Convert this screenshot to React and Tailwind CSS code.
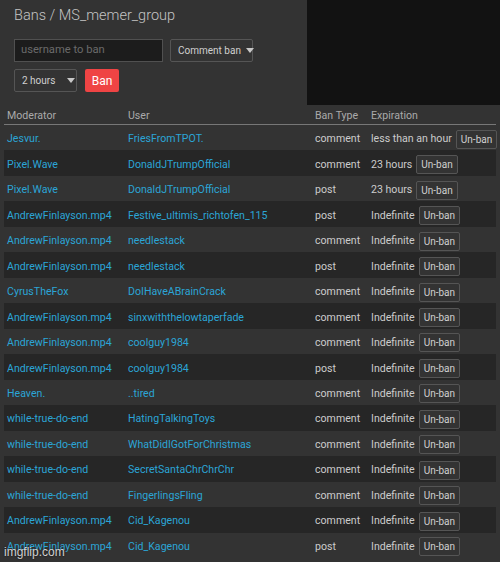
import React from "react";

const rows = [
  ["Jesvur.", "FriesFromTPOT.", "comment", "less than an hour"],
  ["Pixel.Wave", "DonaldJTrumpOfficial", "comment", "23 hours"],
  ["Pixel.Wave", "DonaldJTrumpOfficial", "post", "23 hours"],
  ["AndrewFinlayson.mp4", "Festive_ultimis_richtofen_115", "post", "Indefinite"],
  ["AndrewFinlayson.mp4", "needlestack", "comment", "Indefinite"],
  ["AndrewFinlayson.mp4", "needlestack", "post", "Indefinite"],
  ["CyrusTheFox", "DoIHaveABrainCrack", "comment", "Indefinite"],
  ["AndrewFinlayson.mp4", "sinxwiththelowtaperfade", "comment", "Indefinite"],
  ["AndrewFinlayson.mp4", "coolguy1984", "comment", "Indefinite"],
  ["AndrewFinlayson.mp4", "coolguy1984", "post", "Indefinite"],
  ["Heaven.", "..tired", "comment", "Indefinite"],
  ["while-true-do-end", "HatingTalkingToys", "comment", "Indefinite"],
  ["while-true-do-end", "WhatDidIGotForChristmas", "comment", "Indefinite"],
  ["while-true-do-end", "SecretSantaChrChrChr", "comment", "Indefinite"],
  ["while-true-do-end", "FingerlingsFling", "comment", "Indefinite"],
  ["AndrewFinlayson.mp4", "Cid_Kagenou", "comment", "Indefinite"],
  ["AndrewFinlayson.mp4", "Cid_Kagenou", "post", "Indefinite"],
];

const Caret = () => (
  <svg width="8" height="5" viewBox="0 0 8 5" className="shrink-0">
    <path d="M0 0 L8 0 L4 5 Z" fill="#c8c8c8" />
  </svg>
);

export default function App() {
  return (
    <div
      className="relative w-[500px] h-[562px] overflow-hidden bg-[#333333] text-[#cccccc]"
      style={{ fontFamily: "Roboto, 'Noto Sans', sans-serif" }}
    >
      <div className="flex h-[105px]">
        <div className="w-[307px] pl-[14px]">
          <div className="pt-[6px] text-[14.5px] leading-[20px] text-[#c4c4c4] font-light">
            Bans / MS_memer_group
          </div>
          <div className="mt-[13px] flex gap-[7px]">
            <div className="w-[149px] shrink-0 h-[23px] bg-[#1c1c1c] border border-[#505050] flex items-center pl-[6px] text-[11.2px] text-[#6a6a6a] whitespace-nowrap">
              username to ban
            </div>
            <div className="w-[83px] shrink-0 h-[23px] border border-[#555555] rounded-[2px] flex items-center gap-[5px] pl-[7px] text-[10px] text-[#d0d0d0] whitespace-nowrap">
              <span>Comment ban</span>
              <Caret />
            </div>
          </div>
          <div className="mt-[7px] flex gap-[8px]">
            <div className="w-[63px] shrink-0 h-[23px] border border-[#555555] rounded-[2px] flex items-center gap-[12px] pl-[7px] text-[10px] text-[#d0d0d0] whitespace-nowrap">
              <span>2 hours</span>
              <Caret />
            </div>
            <div className="w-[34px] shrink-0 h-[23px] bg-[#ef4444] rounded-[2px] flex items-center justify-center text-[12px] text-white">
              Ban
            </div>
          </div>
        </div>
        <div className="flex-1 bg-[#121212]" />
      </div>

      <div className="mx-[4px] text-[10.6px]">
        <div className="grid grid-cols-[121px_187px_56px_1fr] h-[20px] pt-[2px] items-center border-b border-[#777777] text-[#aaaaaa]">
          <div className="pl-[3px]">Moderator</div>
          <div className="pl-[3px]">User</div>
          <div className="pl-[3px]">Ban Type</div>
          <div className="pl-[3px]">Expiration</div>
        </div>
        {rows.map((r, i) => (
          <div
            key={i}
            className={
              "grid grid-cols-[121px_187px_56px_1fr] h-[25.47px] pt-[3px] items-center " +
              (i % 2 === 1 ? "bg-[#262626]" : "bg-[#333333]")
            }
          >
            <div className="pl-[3px] text-[#2ba5d6] whitespace-nowrap">{r[0]}</div>
            <div className="pl-[3px] text-[#2ba5d6] whitespace-nowrap">{r[1]}</div>
            <div className="pl-[3px] text-[#cccccc]">{r[2]}</div>
            <div className="pl-[3px] flex items-center gap-[4px] whitespace-nowrap text-[#cccccc]">
              <span>{r[3]}</span>
              <span className="h-[19px] px-[4px] flex items-center border border-[#555555] rounded-[2px] bg-[#333333] text-[10px] text-[#d0d0d0]">
                Un-ban
              </span>
            </div>
          </div>
        ))}
      </div>

      <div
        className="absolute left-[4px] bottom-[1px] text-[12px] text-white/80"
        style={{ fontFamily: "'Liberation Sans', sans-serif", textShadow: "0 0 2px #000" }}
      >
        imgflip.com
      </div>
    </div>
  );
}
